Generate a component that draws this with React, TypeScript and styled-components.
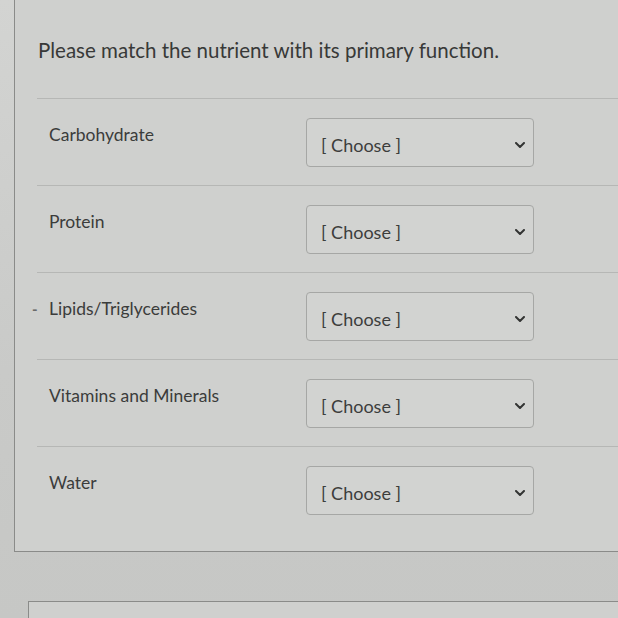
import styled, { createGlobalStyle } from "styled-components";

const GlobalStyle = createGlobalStyle`
  html, body {
    margin: 0;
    padding: 0;
    background: #c9cac8;
    font-family: Lato, "Open Sans", sans-serif;
  }
`;

const nutrients = [
  "Carbohydrate",
  "Protein",
  "Lipids/Triglycerides",
  "Vitamins and Minerals",
  "Water"
];

export default function App() {
  return (
    <>
      <GlobalStyle />
      <Page>
        <QuestionCard>
          <QuestionText>Please match the nutrient with its primary function.</QuestionText>
          <AnswerList>
            {nutrients.map((name, i) => (
              <AnswerRow key={name} last={i === nutrients.length - 1}>
                <Label>
                  {i === 2 && <Marker>-</Marker>}
                  {name}
                </Label>
                <Select>
                  <SelectText>[ Choose ]</SelectText>
                  <Chevron viewBox="0 0 10 6">
                    <path d="M1 1l4 4 4-4" />
                  </Chevron>
                </Select>
              </AnswerRow>
            ))}
          </AnswerList>
        </QuestionCard>
        <NextCard />
      </Page>
    </>
  );
}

const Page = styled.div`
  width: 618px;
  height: 618px;
  overflow: hidden;
  padding-left: 14px;
  box-sizing: border-box;
  background: linear-gradient(180deg, #d3d4d2 0%, #c9cac8 60%, #c6c7c5 100%);
`;

const QuestionCard = styled.div`
  border-left: 1px solid #8a8b89;
  border-bottom: 1px solid #8a8b89;
  padding-top: 35px;
  padding-bottom: 17px;
  background: #cfd0ce;
`;

const QuestionText = styled.div`
  padding-left: 23px;
  font-size: 20.5px;
  line-height: 30px;
  color: #383938;
  margin-bottom: 33px;
`;

const AnswerList = styled.div`
  margin-left: 22px;
  border-top: 1px solid #b6b7b5;
`;

const AnswerRow = styled.div<{ last?: boolean }>`
  display: flex;
  align-items: flex-start;
  height: 87px;
  padding-top: 19px;
  box-sizing: border-box;
  border-bottom: ${(p) => (p.last ? "none" : "1px solid #b6b7b5")};
`;

const Label = styled.div`
  position: relative;
  width: 269px;
  padding-left: 12px;
  padding-top: 5px;
  box-sizing: border-box;
  font-size: 17.5px;
  line-height: 24px;
  color: #3b3c3b;
`;

const Marker = styled.span`
  position: absolute;
  left: -5px;
  color: #6a6b6a;
  font-size: 15px;
  font-weight: 700;
`;

const Select = styled.div`
  width: 228px;
  height: 49px;
  display: flex;
  align-items: center;
  justify-content: space-between;
  padding: 4px 8px 0 14px;
  box-sizing: border-box;
  border: 1px solid #a6a7a5;
  border-radius: 4px;
  background: #d2d3d1;
`;

const SelectText = styled.span`
  font-size: 18px;
  color: #3c3d3c;
`;

const Chevron = styled.svg`
  width: 10px;
  height: 6px;
  fill: none;
  stroke: #333433;
  stroke-width: 2;
  stroke-linecap: round;
  stroke-linejoin: round;
`;

const NextCard = styled.div`
  margin-top: 49px;
  margin-left: 14px;
  height: 60px;
  border-top: 1px solid #8a8b89;
  border-left: 1px solid #8a8b89;
  background: #cfd0ce;
`;
